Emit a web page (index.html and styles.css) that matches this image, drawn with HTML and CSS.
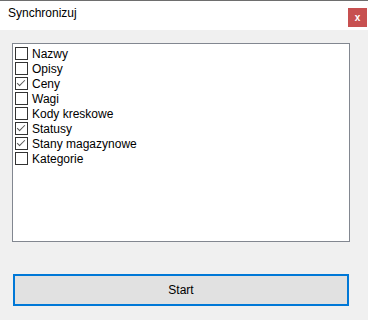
FILE: index.html
```html
<!DOCTYPE html>
<html lang="pl">
<head>
    <meta charset="UTF-8">
    <meta name="viewport" content="width=device-width, initial-scale=1.0">
    <title>Synchronizuj</title>
    <link rel="stylesheet" href="styles.css">
</head>
<body>
    <div class="titlebar">
        <span class="title">Synchronizuj</span>
        <span class="close">x</span>
    </div>

    <div class="content">
        <ul class="checklist">
            <li><span class="box"></span>Nazwy</li>
            <li><span class="box"></span>Opisy</li>
            <li><span class="box checked"></span>Ceny</li>
            <li><span class="box"></span>Wagi</li>
            <li><span class="box"></span>Kody kreskowe</li>
            <li><span class="box checked"></span>Statusy</li>
            <li><span class="box checked"></span>Stany magazynowe</li>
            <li><span class="box"></span>Kategorie</li>
        </ul>
        <button class="start">Start</button>
    </div>
</body>
</html>
```

FILE: styles.css
```css
body, html {
    margin: 0;
    padding: 0;
    width: 100%;
    height: 100%;
}
body {
    background-color: #f0f0f0;
    font-family: "Liberation Sans", Arial, sans-serif;
    font-size: 12px;
    color: #000;
}
.titlebar {
    display: flex;
    align-items: flex-start;
    justify-content: space-between;
    height: 29px;
    background-color: #fff;
    border-top: 1px solid #6e6e6e;
}
.title {
    margin: 5px 0 0 8px;
    font-size: 12px;
}
.close {
    display: flex;
    align-items: center;
    justify-content: center;
    width: 19px;
    height: 19px;
    margin: 7px 1px 0 0;
    background-color: #c75050;
    color: #fff;
    font-size: 10px;
    font-weight: bold;
    line-height: 1;
}
.content {
    display: flex;
    flex-direction: column;
    padding: 13px 18px 0 12px;
}
.checklist {
    list-style: none;
    margin: 0;
    padding: 2px 0 0 2px;
    width: 338px;
    height: 199px;
    box-sizing: border-box;
    background-color: #fff;
    border: 1px solid #828790;
}
.checklist li {
    display: flex;
    align-items: center;
    height: 15px;
    gap: 4px;
}
.box {
    position: relative;
    width: 13px;
    height: 13px;
    box-sizing: border-box;
    border: 1px solid #333;
    background-color: #fff;
}
.box.checked::after {
    content: "";
    position: absolute;
    left: 3px;
    top: 0px;
    width: 3px;
    height: 7px;
    border-right: 1px solid #555;
    border-bottom: 1px solid #555;
    transform: rotate(45deg);
}
.start {
    margin: 32px 0 0 1px;
    width: 336px;
    height: 32px;
    background-color: #e1e1e1;
    border: 2px solid #0078d7;
    font-family: "Liberation Sans", Arial, sans-serif;
    font-size: 12px;
    color: #000;
    padding: 0;
}
```
